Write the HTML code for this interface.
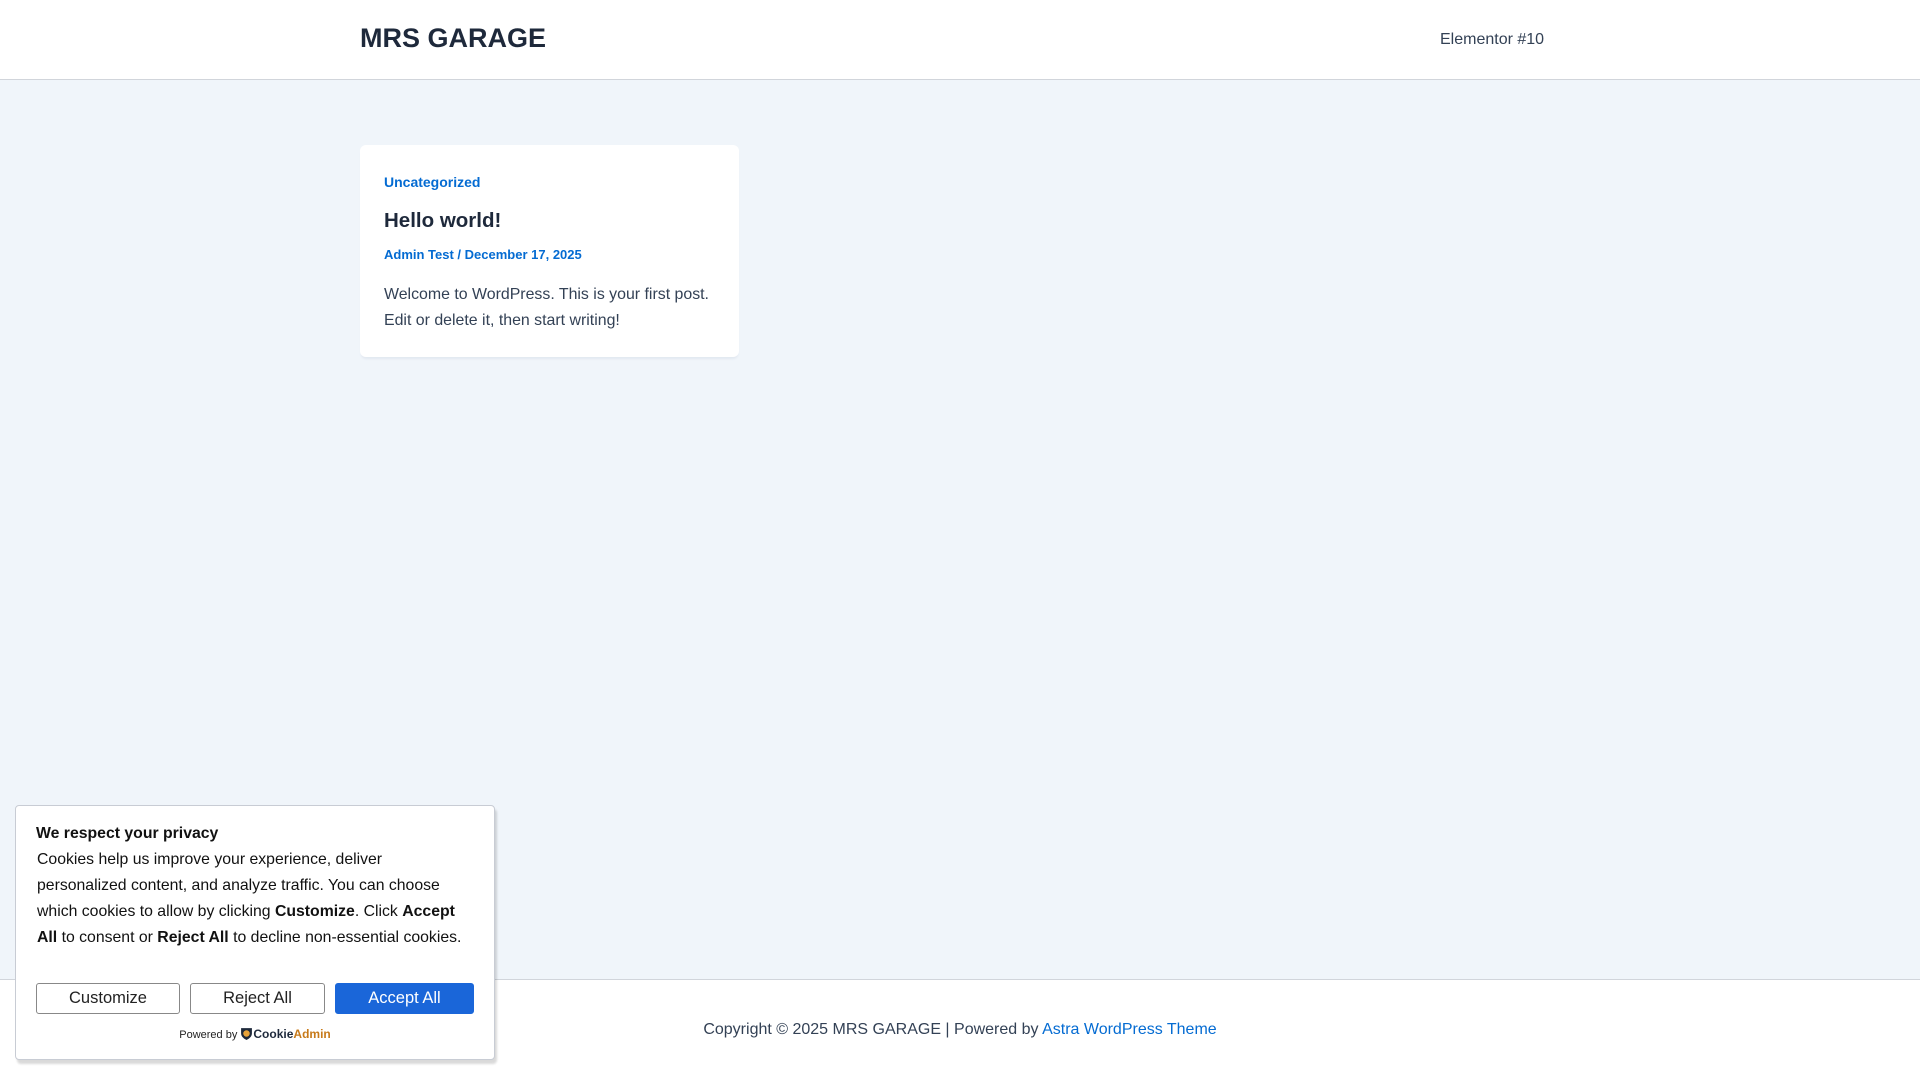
<!DOCTYPE html>
<html><head><meta charset="utf-8"><style>
*{box-sizing:border-box;margin:0;padding:0}
body{width:1920px;height:1080px;background:#f0f5fa;font-family:"Liberation Sans",Arial,sans-serif;position:relative;overflow:hidden}
.hdr{position:absolute;left:0;top:0;width:1920px;height:80px;background:#fff;border-bottom:1px solid #d1d5db}
.logo{position:absolute;left:360px;top:23px;font-size:27px;font-weight:bold;color:#1e293b}
.nav{position:absolute;left:1440px;top:31px;font-size:16px;color:#334155}
.card{position:absolute;left:360px;top:145px;width:379px;height:212px;background:#fff;border-radius:6px;box-shadow:0 3px 2px -1px #e2e8f0;padding:0 24px}
.cat{position:absolute;left:24px;top:29px;font-size:14px;font-weight:bold;color:#046bd2}
.ttl{position:absolute;left:24px;top:64px;font-size:20.5px;font-weight:bold;color:#1e293b}
.meta{position:absolute;left:24px;top:102px;font-size:13px;font-weight:bold;color:#046bd2}
.txt{position:absolute;left:24px;top:137px;width:340px;font-size:15.9px;line-height:26px;color:#334155}
.ftr{position:absolute;left:0;top:979px;width:1920px;height:101px;background:#fff;border-top:1px solid #d1d5db;text-align:center;font-size:16px;color:#334155;padding-top:41px}
.ftr a{color:#046bd2;text-decoration:none}
.ck{position:absolute;left:15px;top:805px;width:480px;height:255px;background:#fff;border:1px solid #c8ccd4;border-radius:4px;box-shadow:2px 4px 2px rgba(0,0,0,.15);padding:19px 20px 0 20px;color:#111}
.ck h4{font-size:15.8px;font-weight:bold;margin-bottom:4px}
.ck p{font-size:15.8px;line-height:26px;padding-left:1px;width:438px}
.btn{position:absolute;top:177px;height:31px;border:1px solid #888;border-radius:3px;font-size:16.5px;text-align:center;line-height:29px;background:#fff;color:#222}
.pw{position:absolute;top:221px;left:0;width:100%;text-align:center;font-size:11px;color:#222}
</style></head><body>
<div class="hdr"><div class="logo">MRS GARAGE</div><div class="nav">Elementor #10</div></div>
<div class="card">
<div class="cat">Uncategorized</div>
<div class="ttl">Hello world!</div>
<div class="meta">Admin Test / December 17, 2025</div>
<div class="txt">Welcome to WordPress. This is your first post. Edit or delete it, then start writing!</div>
</div>
<div class="ftr">Copyright © 2025 MRS GARAGE | Powered by <a>Astra WordPress Theme</a></div>
<div class="ck">
<h4>We respect your privacy</h4>
<p>Cookies help us improve your experience, deliver<br>personalized content, and analyze traffic. You can choose<br>which cookies to allow by clicking <b>Customize</b>. Click <b>Accept</b><br><b>All</b> to consent or <b>Reject All</b> to decline non-essential cookies.</p>
<div class="btn" style="left:20px;width:144px">Customize</div>
<div class="btn" style="left:174px;width:135px">Reject All</div>
<div class="btn" style="left:319px;width:139px;background:#1a66d9;border-color:#1a66d9;color:#fff">Accept All</div>
<div class="pw">Powered by <svg width="13" height="13" viewBox="0 0 12 12" style="vertical-align:-2px"><path d="M1 1h10v5c0 3-3 5-5 6C4 11 1 9 1 6z" fill="#1e293b"/><circle cx="6" cy="6" r="3" fill="#e8a33a"/></svg><b style="color:#1e293b;font-size:12px">Cookie</b><b style="color:#c77a1a;font-size:12px">Admin</b></div>
</div>
</body></html>
